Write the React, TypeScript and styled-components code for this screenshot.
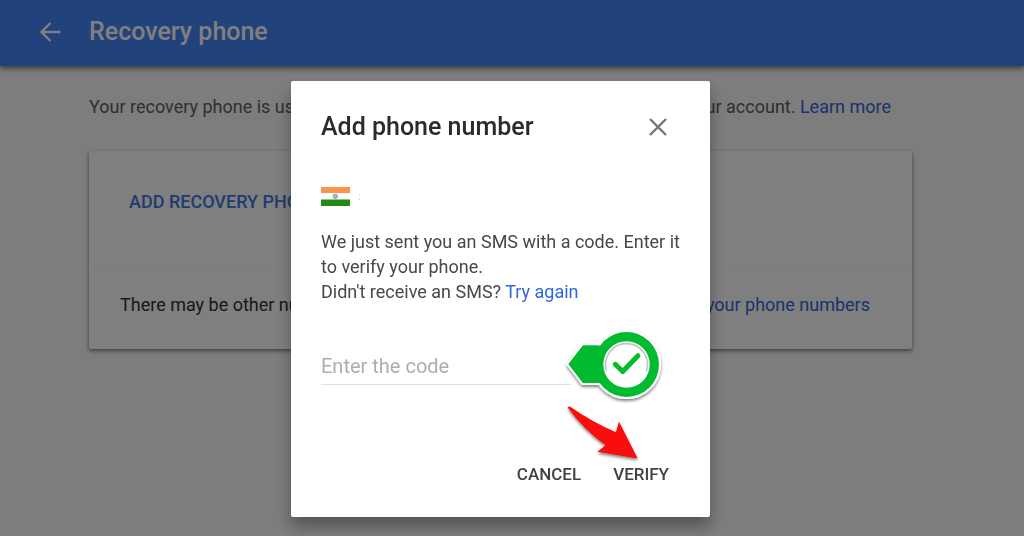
import React from "react";
import styled, { createGlobalStyle } from "styled-components";

const GlobalStyle = createGlobalStyle`
  *, *::before, *::after { box-sizing: border-box; }
  html { background: #fafafa; }
  body { margin: 0; }
  body, button, input { font-family: Roboto, "Liberation Sans", sans-serif; }
`;

const SCROLLBAR_GUTTER = "23px";

const Header = styled.header`
  display: flex;
  align-items: center;
  gap: 26px;
  height: 66px;
  padding: 0 38px 3px;
  background: #4285f4;
  box-shadow: 0 2px 6px rgba(0, 0, 0, 0.6);
`;

const IconButton = styled.button`
  display: flex;
  padding: 0;
  border: 0;
  background: none;
  color: inherit;
  cursor: pointer;
`;

const BackButton = styled(IconButton)`
  color: #fff;
`;

const PageTitle = styled.h1`
  margin: 0;
  color: #fff;
  font-size: 25px;
  font-weight: 500;
  line-height: 32px;
`;

const Content = styled.main`
  max-width: 846px;
  margin: 0 auto;
  padding: 28px ${SCROLLBAR_GUTTER} 40px 0;
`;

const Link = styled.a`
  color: #3367d6;
  text-decoration: none;
`;

const SplitLine = styled.p`
  display: flex;
  justify-content: space-between;
  margin: 0;
  font-size: 18px;
  line-height: 26px;
  white-space: nowrap;
`;

const Intro = styled(SplitLine)`
  padding-right: 21px;
  color: #616161;
`;

const Card = styled.section`
  margin-top: 31px;
  border-radius: 2px;
  background: #fff;
  box-shadow: 0 2px 4px rgba(0, 0, 0, 0.5);
`;

const CardAction = styled.div`
  padding: 38px 40px 50px;
  border-bottom: 1px solid #f4f4f4;
`;

const AddButton = styled.button`
  display: block;
  padding: 0;
  border: 0;
  background: none;
  color: #3f78e0;
  font-size: 18px;
  font-weight: 500;
  line-height: 26px;
  cursor: pointer;
`;

const CardNote = styled.div`
  padding: 26px 42px 31px 31px;
  color: #303030;
`;

const Overlay = styled.div`
  position: fixed;
  inset: 0;
  display: flex;
  justify-content: center;
  align-items: flex-start;
  padding: 81px ${SCROLLBAR_GUTTER} 0 0;
  background: rgba(0, 0, 0, 0.5);
`;

const Dialog = styled.section`
  position: relative;
  width: 100%;
  max-width: 419px;
  padding: 30px 41px 27px 30px;
  border-radius: 2px;
  background: #fff;
  box-shadow: 0 10px 16px rgba(0, 0, 0, 0.32);
`;

const DialogHeader = styled.header`
  display: flex;
  align-items: center;
  justify-content: space-between;
  color: #757575;
`;

const DialogTitle = styled.h2`
  margin: 0;
  color: #2b2b2b;
  font-size: 25px;
  font-weight: 500;
  line-height: 32px;
`;

const Flag = styled.svg`
  display: block;
  margin: 43px 0 22px;
`;

const Message = styled.p`
  margin: 0 -16px 0 0;
  color: #484848;
  font-size: 18px;
  line-height: 25px;
`;

const CodeInput = styled.input`
  display: block;
  width: 250px;
  height: 38px;
  margin-top: 43px;
  padding: 0;
  border: 0;
  border-bottom: 1px solid #e0e0e0;
  outline: 0;
  background: none;
  color: #212121;
  font-size: 20px;
  line-height: 24px;
  &::placeholder { color: #adadad; opacity: 1; }
`;

const Actions = styled.footer`
  display: flex;
  justify-content: flex-end;
  gap: 32px;
  margin-top: 73px;
`;

const TextButton = styled.button`
  padding: 0;
  border: 0;
  background: none;
  color: #424242;
  font-size: 17px;
  font-weight: 500;
  line-height: 32px;
  cursor: pointer;
`;

const Annotations = styled.svg`
  position: absolute;
  top: 239px;
  right: 40px;
  pointer-events: none;
`;

export default function App() {
  return (
    <>
      <GlobalStyle />
      <Header>
        <BackButton type="button" aria-label="Back">
          <svg width="25" height="24" viewBox="0 0 25 24" fill="none" stroke="currentColor" strokeWidth="2.4">
            <path d="M22.5 12H4M12.5 3L3.5 12l9 9" />
          </svg>
        </BackButton>
        <PageTitle>Recovery phone</PageTitle>
      </Header>
      <Content>
        <Intro>
          <span>Your recovery phone is used to reach you</span>
          <span>
            about activity in your account. <Link href="#learn">Learn more</Link>
          </span>
        </Intro>
        <Card>
          <CardAction>
            <AddButton type="button">ADD RECOVERY PHONE</AddButton>
          </CardAction>
          <CardNote>
            <SplitLine>
              <span>There may be other numbers</span>
              <Link href="#phones">Manage your phone numbers</Link>
            </SplitLine>
          </CardNote>
        </Card>
      </Content>

      <Overlay>
        <Dialog role="dialog" aria-modal="true" aria-labelledby="dialog-title">
          <DialogHeader>
            <DialogTitle id="dialog-title">Add phone number</DialogTitle>
            <IconButton type="button" aria-label="Close">
              <svg width="21" height="20" viewBox="0 0 21 20" fill="none" stroke="currentColor" strokeWidth="2.4">
                <path d="M2 2l16 16M18 2L2 18" />
              </svg>
            </IconButton>
          </DialogHeader>
          <Flag width="40" height="21" viewBox="0 0 40 21" role="img" aria-label="India">
            <rect y="1" width="29" height="6" fill="#f7954a" />
            <rect y="7" width="29" height="7" fill="#fbfbfb" />
            <rect y="13.5" width="29" height="6.5" fill="#218a12" />
            <circle cx="14.3" cy="10.3" r="2.2" fill="#b4b4be" stroke="#9a9aa8" />
            <path d="M38.5 8v1M38.5 12v2" stroke="#dcdcdc" />
          </Flag>
          <Message>
            We just sent you an SMS with a code. Enter it to verify your phone.
            <br />
            Didn't receive an SMS? <Link href="#retry">Try again</Link>
          </Message>
          <CodeInput type="text" aria-label="Enter the code" placeholder="Enter the code" />
          <Actions>
            <TextButton type="button">CANCEL</TextButton>
            <TextButton type="button">VERIFY</TextButton>
          </Actions>
          <Annotations width="110" height="144" viewBox="560 320 110 144" aria-hidden="true">
            <defs>
              <filter id="drop" x="-20%" y="-20%" width="140%" height="140%">
                <feDropShadow dx="0" dy="2" stdDeviation="1.6" floodColor="#000" floodOpacity="0.5" />
              </filter>
            </defs>
            <g filter="url(#drop)">
              <g fill="#06bb2d" stroke="#fff" strokeWidth="4" strokeLinejoin="round" paintOrder="stroke">
                <path d="M568.5 364L583 345.5H606V383H583Z" />
                <circle cx="626.5" cy="364.5" r="32.5" />
              </g>
              <path d="M583 345.5H610V383H583L568.5 364Z" fill="#06bb2d" />
            </g>
            <circle cx="626.5" cy="364.5" r="23.2" fill="#fff" />
            <path d="M606.5 371A21 21 0 1 1 646.5 371" fill="none" stroke="#c4c4c4" strokeWidth="1.6" />
            <path d="M615.3 364.3l7.4 7.2 15.2-15.8" fill="none" stroke="#06bb2d" strokeWidth="5" strokeLinecap="round" strokeLinejoin="round" />
            <path
              d="M567.7 407.5Q568.5 406 570.5 407Q592 422 616 432.3L619 421.7L637.7 458.5L597.5 451.8L605.7 445.2Q584 430 567.7 407.5Z"
              fill="#fb0707"
              filter="url(#drop)"
            />
          </Annotations>
        </Dialog>
      </Overlay>
    </>
  );
}
